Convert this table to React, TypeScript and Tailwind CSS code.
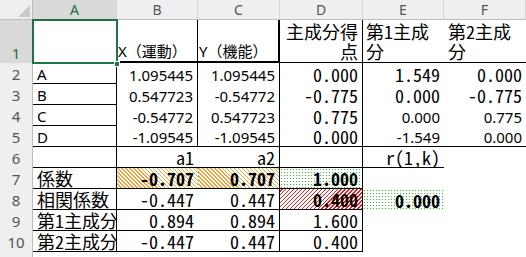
import React from "react"

// Excel-like sheet: principal component sample
const mono = "font-['Noto_Sans_Mono_CJK_JP','Noto_Sans_CJK_JP',monospace] text-[18px] leading-[18px] pb-[1px]"
const prop = "font-['Noto_Sans','Noto_Sans_CJK_JP',sans-serif] text-[15px] leading-[17px]"

const orange = "bg-[image:repeating-linear-gradient(45deg,#f2a23c_0px,#f2a23c_1px,#ffffff_1px,#ffffff_2.8px)]"
const red = "bg-[image:repeating-linear-gradient(-45deg,#f01818_0px,#f01818_1px,#ffffff_1px,#ffffff_2.8px)]"
const dots = "bg-[image:radial-gradient(circle,#33c233_0.7px,transparent_0.9px)] bg-[size:3px_3px]"

function Cell({ className = "", wrap, children }: { className?: string; wrap?: boolean; children?: React.ReactNode }) {
  return (
    <div
      className={
        "flex items-end overflow-hidden border-black px-[4px] text-black " +
        (wrap ? "whitespace-normal " : "whitespace-nowrap ") +
        className
      }
    >
      {children}
    </div>
  )
}

function ColHead({ label, selected }: { label: string; selected?: boolean }) {
  return (
    <div
      className={
        "flex items-center justify-center border-r border-b border-r-[#d4d4d4] border-b-[#bdbdbd] font-['Noto_Sans',sans-serif] text-[14px] " +
        (selected ? "bg-[#d9d9d9] text-[#217346]" : "bg-[#efefef] text-[#555]")
      }
    >
      {label}
    </div>
  )
}

function RowHead({ n, selected }: { n: number; selected?: boolean }) {
  return (
    <div
      className={
        "flex items-end justify-center border-r border-r-[#bdbdbd] pb-[1px] font-['Noto_Sans',sans-serif] text-[15px] leading-[18px] " +
        (selected ? "bg-[#d9d9d9] text-[#217346]" : "bg-[#efefef] text-[#555]")
      }
    >
      {n}
    </div>
  )
}

export default function App() {
  return (
    <div className="relative h-[257px] w-[526px] overflow-hidden bg-white">
      <div className="grid grid-cols-[33px_84px_81px_82px_83px_81px_82px] grid-rows-[20px_43px_repeat(9,21px)_20px]">
        {/* header row */}
        <div className="relative border-r border-b border-r-[#bdbdbd] border-b-[#bdbdbd] bg-[#efefef]">
          <svg className="absolute top-[5px] left-[18px]" width="12" height="12" viewBox="0 0 12 12">
            <polygon points="12,0 12,12 0,12" fill="#c9c9c9" />
          </svg>
        </div>
        <ColHead label="A" selected />
        <ColHead label="B" />
        <ColHead label="C" />
        <ColHead label="D" />
        <ColHead label="E" />
        <ColHead label="F" />

        {/* row 1 */}
        <RowHead n={1} selected />
        <Cell className="border-r border-b" />
        <Cell className={prop + " border-r border-b-2 pb-[1px] pl-[1px]"}>X（運動）</Cell>
        <Cell className={prop + " border-r-2 border-b-2 pb-[1px] pl-[1px]"}>Y（機能）</Cell>
        <Cell wrap className={mono + " justify-end border-r border-b"}>
          <span className="block text-right leading-[20px]">主成分得点</span>
        </Cell>
        <Cell wrap className={mono + " border-b pl-[3px]"}>
          <span className="block leading-[20px]">第1主成分</span>
        </Cell>
        <Cell wrap className={mono + " border-b"}>
          <span className="block leading-[20px]">第2主成分</span>
        </Cell>

        {/* row 2 */}
        <RowHead n={2} />
        <Cell className={prop + " border-r border-b"}>A</Cell>
        <Cell className={prop + " justify-end border-r"}>1.095445</Cell>
        <Cell className={prop + " justify-end border-r"}>1.095445</Cell>
        <Cell className={mono + " justify-end border-r"}>0.000</Cell>
        <Cell className={mono + " justify-end"}>1.549</Cell>
        <Cell className={mono + " justify-end"}>0.000</Cell>

        {/* row 3 */}
        <RowHead n={3} />
        <Cell className={prop + " border-r border-b"}>B</Cell>
        <Cell className={prop + " justify-end border-r"}>0.547723</Cell>
        <Cell className={prop + " justify-end border-r"}>-0.54772</Cell>
        <Cell className={mono + " justify-end border-r"}>-0.775</Cell>
        <Cell className={mono + " justify-end"}>0.000</Cell>
        <Cell className={mono + " justify-end"}>-0.775</Cell>

        {/* row 4 */}
        <RowHead n={4} />
        <Cell className={prop + " border-r border-b"}>C</Cell>
        <Cell className={prop + " justify-end border-r"}>-0.54772</Cell>
        <Cell className={prop + " justify-end border-r"}>0.547723</Cell>
        <Cell className={mono + " justify-end border-r"}>0.775</Cell>
        <Cell className={prop + " justify-end"}>0.000</Cell>
        <Cell className={prop + " justify-end"}>0.775</Cell>

        {/* row 5 */}
        <RowHead n={5} />
        <Cell className={prop + " border-r border-b"}>D</Cell>
        <Cell className={prop + " justify-end border-r border-b"}>-1.09545</Cell>
        <Cell className={prop + " justify-end border-r border-b"}>-1.09545</Cell>
        <Cell className={mono + " justify-end border-r border-b"}>0.000</Cell>
        <Cell className={prop + " justify-end border-b"}>-1.549</Cell>
        <Cell className={prop + " justify-end border-b"}>0.000</Cell>

        {/* row 6 */}
        <RowHead n={6} />
        <Cell className="border-r border-b" />
        <Cell className={mono + " justify-end border-b"}>a1</Cell>
        <Cell className={mono + " justify-end border-r border-b"}>a2</Cell>
        <Cell className="border-r border-b" />
        <Cell className={mono + " justify-end border-b"}>r(1,k)</Cell>
        <Cell />

        {/* row 7 */}
        <RowHead n={7} />
        <Cell className={mono + " border-r border-b"}>係数</Cell>
        <Cell className={mono + " " + orange + " justify-end border-b font-bold"}>-0.707</Cell>
        <Cell className={mono + " " + orange + " justify-end border-r border-b font-bold"}>0.707</Cell>
        <Cell className={mono + " " + dots + " justify-end border-r border-b font-bold"}>1.000</Cell>
        <Cell />
        <Cell />

        {/* row 8 */}
        <RowHead n={8} />
        <Cell className={mono + " border-r border-b"}>相関係数</Cell>
        <Cell className={mono + " justify-end border-b"}>-0.447</Cell>
        <Cell className={mono + " justify-end border-r border-b"}>0.447</Cell>
        <Cell className={mono + " " + red + " justify-end border-r border-b font-bold"}>0.400</Cell>
        <Cell className={mono + " " + dots + " justify-end font-bold"}>0.000</Cell>
        <Cell />

        {/* row 9 */}
        <RowHead n={9} />
        <Cell className={mono + " border-r border-b"}>第1主成分</Cell>
        <Cell className={mono + " justify-end border-b"}>0.894</Cell>
        <Cell className={mono + " justify-end border-r border-b"}>0.894</Cell>
        <Cell className={mono + " justify-end border-r border-b"}>1.600</Cell>
        <Cell />
        <Cell />

        {/* row 10 */}
        <RowHead n={10} />
        <Cell className={mono + " border-r border-b"}>第2主成分</Cell>
        <Cell className={mono + " justify-end border-b"}>-0.447</Cell>
        <Cell className={mono + " justify-end border-r border-b"}>0.447</Cell>
        <Cell className={mono + " justify-end border-r border-b"}>0.400</Cell>
        <Cell />
        <Cell />

        <RowHead n={11} />
      </div>

      {/* active cell A1 */}
      <div className="absolute top-[19px] left-[32px] h-[45px] w-[86px] border-2 border-[#217346]" />
      <div className="absolute top-[61px] left-[114px] h-[6px] w-[6px] border border-white bg-[#217346]" />
    </div>
  )
}
